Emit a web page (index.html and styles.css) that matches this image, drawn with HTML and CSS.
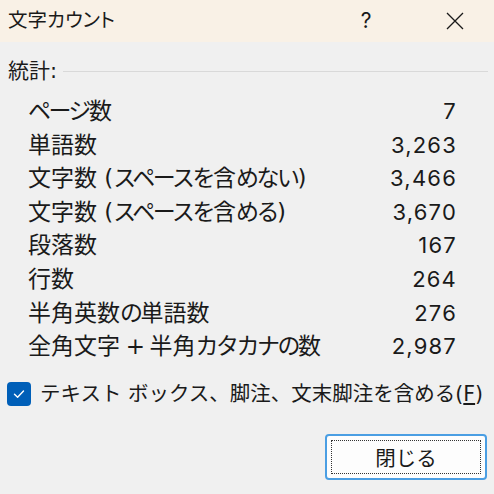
FILE: index.html
```html
<!DOCTYPE html>
<html lang="ja">
<head>
<meta charset="utf-8">
<link rel="stylesheet" href="styles.css">
</head>
<body>
<div class="dialog">
  <div class="titlebar">
    <div class="title">文字カウント</div>
    <div class="help">?</div>
    <div class="close">
      <svg width="20" height="20" viewBox="0 0 20 20"><path d="M2 2 L18 18 M18 2 L2 18" stroke="#1a1a1a" stroke-width="1.3" fill="none"/></svg>
    </div>
  </div>
  <div class="content">
    <div class="group-head">
      <span class="group-label">統計:</span>
      <span class="group-line"></span>
    </div>
    <div class="stats">
      <div class="label"><span class="kn">ページ</span>数</div><div class="value">7</div>
      <div class="label">単語数</div><div class="value">3,263</div>
      <div class="label">文字数 (<span class="kn">スペースを</span>含<span class="kn">めない</span>)</div><div class="value">3,466</div>
      <div class="label">文字数 (<span class="kn">スペースを</span>含<span class="kn">める</span>)</div><div class="value">3,670</div>
      <div class="label">段落数</div><div class="value">167</div>
      <div class="label">行数</div><div class="value">264</div>
      <div class="label">半角英数<span class="kn">の</span>単語数</div><div class="value">276</div>
      <div class="label">全角文字<span class="plus"> + </span>半角<span class="kn">カタカナの</span>数</div><div class="value">2,987</div>
    </div>
    <label class="check-row">
      <span class="checkbox">
        <svg width="14" height="14" viewBox="0 0 14 14"><path d="M2.5 7.2 L5.6 10.2 L11.5 4" stroke="#fff" stroke-width="1.4" fill="none" stroke-linecap="round" stroke-linejoin="round"/></svg>
      </span>
      <span class="check-text">テキスト ボックス、脚注、文末脚注を含める(<u>F</u>)</span>
    </label>
    <div class="buttons">
      <button class="btn"><span class="focus">閉じる</span></button>
    </div>
  </div>
</div>
</body>
</html>
```
FILE: styles.css
```css
html, body {
  margin: 0;
  padding: 0;
}
body {
  width: 494px;
  height: 494px;
  background: #f0f0f0;
  font-family: "DejaVu Sans", "Noto Sans CJK JP", sans-serif;
  color: #1a1a1a;
  overflow: hidden;
}
.titlebar {
  height: 42px;
  background: #f9f1e6;
  display: flex;
  align-items: center;
  padding-left: 8px;
}
.title {
  font-size: 19.5px;
  line-height: 42px;
  flex: 1;
  font-feature-settings: "palt";
}
.help {
  width: 20px;
  text-align: center;
  font-family: "Inter", "DejaVu Sans", sans-serif;
  font-size: 21px;
  line-height: 42px;
  margin-right: 69px;
}
.close {
  width: 20px;
  height: 20px;
  margin-right: 29px;
}
.close svg { display: block; }
.content {
  padding: 0 6px 0 8px;
}
.group-head {
  display: flex;
  align-items: center;
  height: 20px;
  margin-top: 19px;
}
.group-label {
  font-size: 21px;
  line-height: 20px;
  margin-right: 6px;
}
.group-line {
  flex: 1;
  height: 1px;
  background: #d9d9d9;
}
.stats {
  display: grid;
  grid-template-columns: 1fr auto;
  grid-auto-rows: 33.6px;
  align-items: center;
  margin-top: 14px;
  padding-left: 20px;
  padding-right: 31px;
  font-size: 23px;
  line-height: 33.6px;
}
.label {
  white-space: nowrap;
}
.kn {
  letter-spacing: -2.5px;
}
.plus {
  letter-spacing: -1.5px;
}
.value {
  text-align: right;
  font-family: "Inter", "DejaVu Sans", sans-serif;
  font-size: 22px;
  letter-spacing: 1.2px;
}
.check-row {
  display: flex;
  align-items: center;
  margin-top: 18px;
  height: 24px;
  margin-left: -1px;
}
.checkbox {
  flex: none;
  width: 24px;
  height: 24px;
  border-radius: 4px;
  background: #005fb8;
  display: flex;
  align-items: center;
  justify-content: center;
  margin-right: 9px;
}
.checkbox svg { display: block; }
.check-text {
  font-size: 20.5px;
  line-height: 24px;
  white-space: nowrap;
}
.check-text u {
  text-underline-offset: 2px;
}
.buttons {
  display: flex;
  justify-content: flex-end;
  margin-top: 28px;
  padding-right: 1px;
}
.btn {
  width: 162px;
  height: 46px;
  border: 2px solid #4a9ee3;
  border-radius: 4px;
  background: #fdfdfd;
  padding: 4px;
  font-family: inherit;
  color: #1a1a1a;
  display: flex;
}
.focus {
  flex: 1;
  border: 1px dotted #333;
  display: flex;
  align-items: center;
  justify-content: center;
  font-size: 20.5px;
}
```
